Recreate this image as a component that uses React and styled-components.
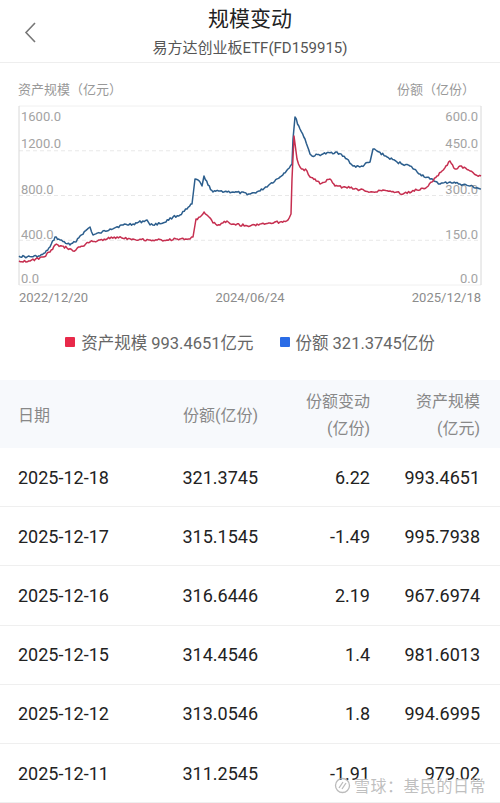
import React from 'react';
import styled, { createGlobalStyle } from 'styled-components';

const GlobalStyle = createGlobalStyle`
  html, body {
    margin: 0;
    padding: 0;
    background: #fff;
    overflow: hidden;
  }
  body {
    font-family: Roboto, "Noto Sans CJK SC", sans-serif;
  }
`;

const Page = styled.div`
  position: relative;
  width: 500px;
  height: 803px;
  overflow: hidden;
  background: #fff;
`;

const Header = styled.div`
  position: relative;
  height: 63px;
  border-bottom: 1px solid #eeeeee;
  display: flex;
  flex-direction: column;
  align-items: center;
  padding-top: 6px;
  box-sizing: border-box;
`;

const BackButton = styled.div`
  position: absolute;
  left: 22px;
  top: 20px;
  width: 16px;
  height: 26px;
`;

const Title = styled.div`
  font-size: 21px;
  line-height: 26px;
  color: #222;
`;

const Subtitle = styled.div`
  margin-top: 6px;
  font-size: 15px;
  line-height: 20px;
  color: #555;
`;

const AxisTitles = styled.div`
  display: flex;
  justify-content: space-between;
  padding: 19px 25px 0 18px;
  font-size: 13px;
  line-height: 16px;
  color: #999;
`;

const ChartSvg = styled.svg`
  display: block;
  width: 500px;
  height: 210px;
  margin-top: 1px;
`;

const Legend = styled.div`
  display: flex;
  justify-content: center;
  gap: 26px;
  margin-top: 20px;
  height: 26px;
  align-items: center;
  font-size: 16.5px;
  color: #666;
`;

const LegendItem = styled.div`
  display: flex;
  align-items: center;
  gap: 6px;
`;

const Swatch = styled.span`
  width: 10px;
  height: 10px;
  border-radius: 1px;
  background: ${p => p.$color};
`;

const Row = styled.div`
  display: grid;
  grid-template-columns: 100px 140px 112px 110px;
  padding: 0 20px 0 18px;
  align-items: center;
  box-sizing: border-box;
`;

const HeadRow = styled(Row)`
  margin-top: 25px;
  height: 68px;
  background: #f7f9fc;
  font-size: 16px;
  line-height: 27px;
  color: #888;
  padding-top: 2px;
`;

const DataRow = styled(Row)`
  height: 59.2px;
  border-bottom: 1px solid #efefef;
  font-size: 18px;
  color: #222;
`;

const Cell = styled.div`
  text-align: ${p => (p.$left ? 'left' : 'right')};
  white-space: nowrap;
`;

const Watermark = styled.div`
  position: absolute;
  right: 14px;
  bottom: 6px;
  display: flex;
  align-items: center;
  gap: 3px;
  font-size: 16px;
  color: rgba(170, 170, 170, 0.75);
  text-shadow: 0 0 1px #fff, 0 0 1px #fff;
  letter-spacing: 0.5px;
`;

const blueKeys = [[19,257],[27,258],[40,257],[45,254],[50,248],[55,238],[60,241],[70,246],[75,243],[80,237],[90,228],[93,236],[100,234],[110,230],[123,226],[133,225],[147,221],[150,226],[163,224],[173,218],[180,216],[187,210],[192,205],[195,180],[200,183],[202,187],[204,177],[208,186],[213,193],[220,192],[233,193],[250,195],[260,192],[270,185],[280,178],[288,170],[292,165],[293,140],[295,118],[300,130],[305,140],[310,155],[312,157],[323,155],[337,153],[347,160],[353,167],[360,168],[370,163],[373,150],[377,152],[387,158],[397,163],[410,167],[420,175],[430,180],[437,183],[440,185],[450,183],[460,185],[470,187],[481,190]];

const redKeys = [[19,262],[30,262],[43,258],[50,253],[55,246],[62,247],[67,249],[73,252],[80,248],[90,243],[100,241],[117,238],[133,240],[150,241],[167,241],[180,240],[190,240],[193,238],[196,220],[200,218],[204,213],[208,217],[213,224],[220,226],[227,222],[233,225],[250,227],[260,225],[270,224],[280,223],[288,221],[291,215],[292,180],[294,137],[297,160],[300,168],[307,172],[310,178],[315,180],[320,185],[330,180],[335,187],[343,188],[357,190],[370,193],[383,191],[397,193],[403,195],[417,191],[427,188],[432,183],[437,177],[442,172],[450,162],[455,170],[460,167],[470,172],[476,176],[481,177]];

// interpolate key points and add a little jitter so the lines look like daily data
function buildPath(keys, seed) {
  let s = seed;
  const rand = () => {
    s = (s * 9301 + 49297) % 233280;
    return s / 233280 - 0.5;
  };
  const pts = [];
  for (let i = 0; i < keys.length - 1; i++) {
    const [x0, y0] = keys[i];
    const [x1, y1] = keys[i + 1];
    const steep = Math.abs(y1 - y0) / Math.max(x1 - x0, 0.1) > 4;
    const n = Math.max(1, Math.round((x1 - x0) / 1.4));
    for (let k = 0; k < n; k++) {
      const t = k / n;
      const jitter = steep || k === 0 ? 0 : rand() * 2.4;
      pts.push([x0 + (x1 - x0) * t, y0 + (y1 - y0) * t + jitter]);
    }
  }
  pts.push(keys[keys.length - 1]);
  return pts.map((p, i) => `${i ? 'L' : 'M'}${p[0].toFixed(1)} ${(p[1] - 100).toFixed(1)}`).join(' ');
}

const grid = [7, 51.75, 96.5, 141.25, 186];
const leftLabels = ['1600.0', '1200.0', '800.0', '400.0', '0.0'];
const rightLabels = ['600.0', '450.0', '300.0', '150.0', '0.0'];
const labelY = [21.5, 48.5, 94.5, 139.5, 183.5];

const rows = [
  ['2025-12-18', '321.3745', '6.22', '993.4651'],
  ['2025-12-17', '315.1545', '-1.49', '995.7938'],
  ['2025-12-16', '316.6446', '2.19', '967.6974'],
  ['2025-12-15', '314.4546', '1.4', '981.6013'],
  ['2025-12-12', '313.0546', '1.8', '994.6995'],
  ['2025-12-11', '311.2545', '-1.91', '979.02'],
];

const Chart = () => (
  <ChartSvg viewBox="0 0 500 210">
    {grid.map((y, i) => (
      <line
        key={y}
        x1="19"
        x2="481"
        y1={y}
        y2={y}
        stroke={i === 0 || i === 4 ? '#f0f0f0' : '#e8e8e8'}
        strokeDasharray={i === 0 || i === 4 ? undefined : '4 3'}
        strokeWidth="1"
      />
    ))}
    <line x1="19" x2="19" y1="7" y2="186" stroke="#d8d8d8" strokeWidth="1" />
    <line x1="481" x2="481" y1="7" y2="186" stroke="#d8d8d8" strokeWidth="1" />
    <g fontFamily="Roboto, sans-serif" fontSize="13" fill="#a3a3a3">
      {leftLabels.map((t, i) => (
        <text key={t} x="21" y={labelY[i]}>{t}</text>
      ))}
      {rightLabels.map((t, i) => (
        <text key={t + 'r'} x="478" y={labelY[i]} textAnchor="end">{t}</text>
      ))}
    </g>
    <path d={buildPath(blueKeys, 17)} fill="none" stroke="#2c5e8d" strokeWidth="1.5" strokeLinejoin="round" />
    <path d={buildPath(redKeys, 91)} fill="none" stroke="#c62f50" strokeWidth="1.5" strokeLinejoin="round" />
    <g fontFamily="Roboto, sans-serif" fontSize="13" fill="#8c8c8c">
      <text x="19" y="202.5">2022/12/20</text>
      <text x="250" y="202.5" textAnchor="middle">2024/06/24</text>
      <text x="481" y="202.5" textAnchor="end">2025/12/18</text>
    </g>
  </ChartSvg>
);

const App = () => (
  <Page>
    <GlobalStyle />
    <Header>
      <BackButton>
        <svg width="16" height="26" viewBox="0 0 16 26">
          <polyline points="13,3 4,12.5 13,22" fill="none" stroke="#777" strokeWidth="1.6" />
        </svg>
      </BackButton>
      <Title>规模变动</Title>
      <Subtitle>易方达创业板ETF(FD159915)</Subtitle>
    </Header>

    <AxisTitles>
      <span>资产规模（亿元）</span>
      <span>份额（亿份）</span>
    </AxisTitles>
    <Chart />

    <Legend>
      <LegendItem>
        <Swatch $color="#e8294a" />
        <span>资产规模 993.4651亿元</span>
      </LegendItem>
      <LegendItem>
        <Swatch $color="#2a6ce6" />
        <span>份额 321.3745亿份</span>
      </LegendItem>
    </Legend>

    <HeadRow>
      <Cell $left>日期</Cell>
      <Cell>份额(亿份)</Cell>
      <Cell>份额变动<br />(亿份)</Cell>
      <Cell>资产规模<br />(亿元)</Cell>
    </HeadRow>
    {rows.map(r => (
      <DataRow key={r[0]}>
        <Cell $left>{r[0]}</Cell>
        <Cell>{r[1]}</Cell>
        <Cell>{r[2]}</Cell>
        <Cell>{r[3]}</Cell>
      </DataRow>
    ))}

    <Watermark>
      <svg width="17" height="17" viewBox="0 0 17 17">
        <circle cx="8.5" cy="8.5" r="7" fill="none" stroke="rgba(170,170,170,0.8)" strokeWidth="1.3" />
        <path d="M5 11 L9 5 M8 12 L12 6" stroke="rgba(170,170,170,0.8)" strokeWidth="1.3" fill="none" />
      </svg>
      雪球：基民的日常
    </Watermark>
  </Page>
);

export default App;
